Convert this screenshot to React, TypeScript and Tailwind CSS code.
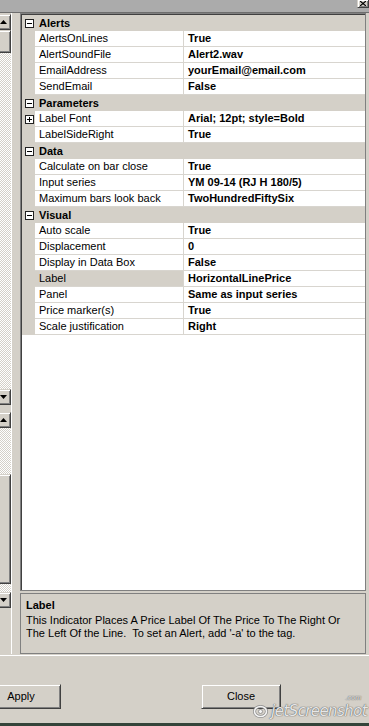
import React from 'react'

type Row =
  | { kind: 'cat'; name: string }
  | { kind: 'prop'; name: string; value: string; expand?: boolean; selected?: boolean }

const rows: Row[] = [
  { kind: 'cat', name: 'Alerts' },
  { kind: 'prop', name: 'AlertsOnLines', value: 'True' },
  { kind: 'prop', name: 'AlertSoundFile', value: 'Alert2.wav' },
  { kind: 'prop', name: 'EmailAddress', value: 'yourEmail@email.com' },
  { kind: 'prop', name: 'SendEmail', value: 'False' },
  { kind: 'cat', name: 'Parameters' },
  { kind: 'prop', name: 'Label Font', value: 'Arial; 12pt; style=Bold', expand: true },
  { kind: 'prop', name: 'LabelSideRight', value: 'True' },
  { kind: 'cat', name: 'Data' },
  { kind: 'prop', name: 'Calculate on bar close', value: 'True' },
  { kind: 'prop', name: 'Input series', value: 'YM 09-14 (RJ H 180/5)' },
  { kind: 'prop', name: 'Maximum bars look back', value: 'TwoHundredFiftySix' },
  { kind: 'cat', name: 'Visual' },
  { kind: 'prop', name: 'Auto scale', value: 'True' },
  { kind: 'prop', name: 'Displacement', value: '0' },
  { kind: 'prop', name: 'Display in Data Box', value: 'False' },
  { kind: 'prop', name: 'Label', value: 'HorizontalLinePrice', selected: true },
  { kind: 'prop', name: 'Panel', value: 'Same as input series' },
  { kind: 'prop', name: 'Price marker(s)', value: 'True' },
  { kind: 'prop', name: 'Scale justification', value: 'Right' },
]

const raised =
  'bg-[#d4d0c8] border border-t-[#d4d0c8] border-l-[#d4d0c8] border-r-[#404040] border-b-[#404040] shadow-[inset_1px_1px_#ffffff,inset_-1px_-1px_#808080]'

const track =
  'bg-[image:repeating-conic-gradient(#d4d0c8_0_25%,#ffffff_0_50%)] bg-[length:2px_2px]'

const ArrowBtn = ({ up }: { up?: boolean }) => (
  <div className={`h-[16px] w-[16px] shrink-0 flex items-center justify-center ${raised}`}>
    <svg width="7" height="4" viewBox="0 0 7 4">
      {up ? <polygon points="3.5,0 7,4 0,4" fill="#000" /> : <polygon points="0,0 7,0 3.5,4" fill="#000" />}
    </svg>
  </div>
)

const ExpandBox = ({ plus }: { plus?: boolean }) => (
  <div className="w-[9px] h-[9px] border border-[#222] bg-white flex items-center justify-center relative">
    <div className="w-[5px] h-[1px] bg-black" />
    {plus && <div className="absolute w-[1px] h-[5px] bg-black" />}
  </div>
)

const App = () => {
  return (
    <div className="w-[369px] h-[726px] bg-[#d4d0c8] flex flex-col overflow-hidden relative font-['Liberation_Sans',Arial,sans-serif] text-[11px] text-black">
      {/* window strip at the top */}
      <div className="h-[12px] bg-[#ababab] flex justify-end shrink-0">
        <div className={`w-[12px] h-[9px] -mt-[1px] flex items-center justify-center ${raised}`}>
          <svg width="6" height="5" viewBox="0 0 6 5">
            <path d="M0 0 L6 5 M6 0 L0 5" stroke="#000" strokeWidth="1.2" />
          </svg>
        </div>
      </div>
      <div className="h-[1px] bg-[#6e6e6e] shrink-0" />

      <div className="h-[641px] flex shrink-0">
        {/* scrollbars on the left */}
        <div className="w-[12px] border-r border-white overflow-hidden pt-[1px] flex flex-col">
          <div className="-ml-[5px] w-[16px] h-[391px] flex flex-col">
            <ArrowBtn up />
            <div className={`h-[23px] shrink-0 ${raised}`} />
            <div className={`flex-1 ${track}`} />
            <ArrowBtn />
          </div>
          <div className="h-[7px]" />
          <div className="-ml-[5px] w-[16px] h-[196px] flex flex-col">
            <ArrowBtn up />
            <div className={`h-[46px] shrink-0 ${track}`} />
            <div className={`h-[110px] shrink-0 ${raised}`} />
            <div className={`flex-1 ${track}`} />
            <ArrowBtn />
          </div>
        </div>
        <div className="w-[8px]" />

        <div className="flex-1 flex flex-col">
          {/* property grid */}
          <div className="h-[578px] border border-[#808080] bg-white flex flex-col">
            <div className="flex-1 border-t border-l border-[#404040] flex flex-col">
              {rows.map((r, i) =>
                r.kind === 'cat' ? (
                  <div key={i} className="h-[16px] flex bg-[#d4d0c8]">
                    <div className="w-[13px] flex items-center pl-[3px]">
                      <ExpandBox />
                    </div>
                    <div className="pl-[4px] font-bold leading-[16px]">{r.name}</div>
                  </div>
                ) : (
                  <div key={i} className="h-[16px] flex">
                    <div className="w-[13px] bg-[#d4d0c8] flex items-center pl-[3px]">
                      {r.expand && <ExpandBox plus />}
                    </div>
                    <div
                      className={`w-[149px] border-r border-b border-[#d8d5cf] pl-[4px] leading-[15px] whitespace-nowrap ${
                        r.selected ? 'bg-[#d4d0c8]' : 'bg-white'
                      }`}
                    >
                      {r.name}
                    </div>
                    <div className="flex-1 border-b border-[#d8d5cf] pl-[4px] leading-[15px] font-bold whitespace-nowrap">
                      {r.value}
                    </div>
                  </div>
                ),
              )}
            </div>
          </div>

          {/* description panel */}
          <div className="mt-[2px] h-[61px] border border-[#808080] pl-[5px] pt-[5px]">
            <div className="font-bold leading-[13px]">Label</div>
            <div className="mt-[2px] leading-[13px] whitespace-pre">
              {'This Indicator Places A Price Label Of The Price To The Right Or\nThe Left Of the Line.  To set an Alert, add \'-a\' to the tag.'}
            </div>
          </div>
        </div>
        <div className="w-[3px]" />
      </div>

      <div className="h-[1px] shrink-0" />
      <div className="h-[1px] bg-white shrink-0" />

      {/* buttons */}
      <div className="h-[67px] flex items-start pt-[28px] shrink-0">
        <div className={`-ml-[19px] w-[80px] h-[25px] flex items-center justify-center ${raised}`}>Apply</div>
        <div className={`ml-[140px] w-[80px] h-[25px] flex items-center justify-center ${raised}`}>Close</div>
      </div>
      <div className="h-[3px] bg-[#34443a] shrink-0" />

      {/* screenshot watermark */}
      <div className="absolute right-[2px] bottom-[7px] flex items-end gap-[3px] text-white/85 italic [text-shadow:0_0_1px_#555,0_0_1px_#555]">
        <svg width="15" height="13" viewBox="0 0 15 13" className="mb-[1px]">
          <ellipse cx="7.5" cy="6.5" rx="6" ry="5" fill="none" stroke="#8a8a8a" strokeWidth="3" />
          <ellipse cx="7.5" cy="6.5" rx="6" ry="5" fill="none" stroke="#f4f4f4" strokeWidth="1.6" />
          <circle cx="7.5" cy="6.5" r="2" fill="#f4f4f4" stroke="#8a8a8a" strokeWidth="0.8" />
        </svg>
        <span className="text-[15px] leading-[15px] font-['DejaVu_Sans',sans-serif] tracking-[-0.6px]">jetScreenshot</span>
        <span className="absolute right-[6px] -top-[10px] text-[7px] leading-[7px]">.com</span>
      </div>
    </div>
  )
}

export default App
